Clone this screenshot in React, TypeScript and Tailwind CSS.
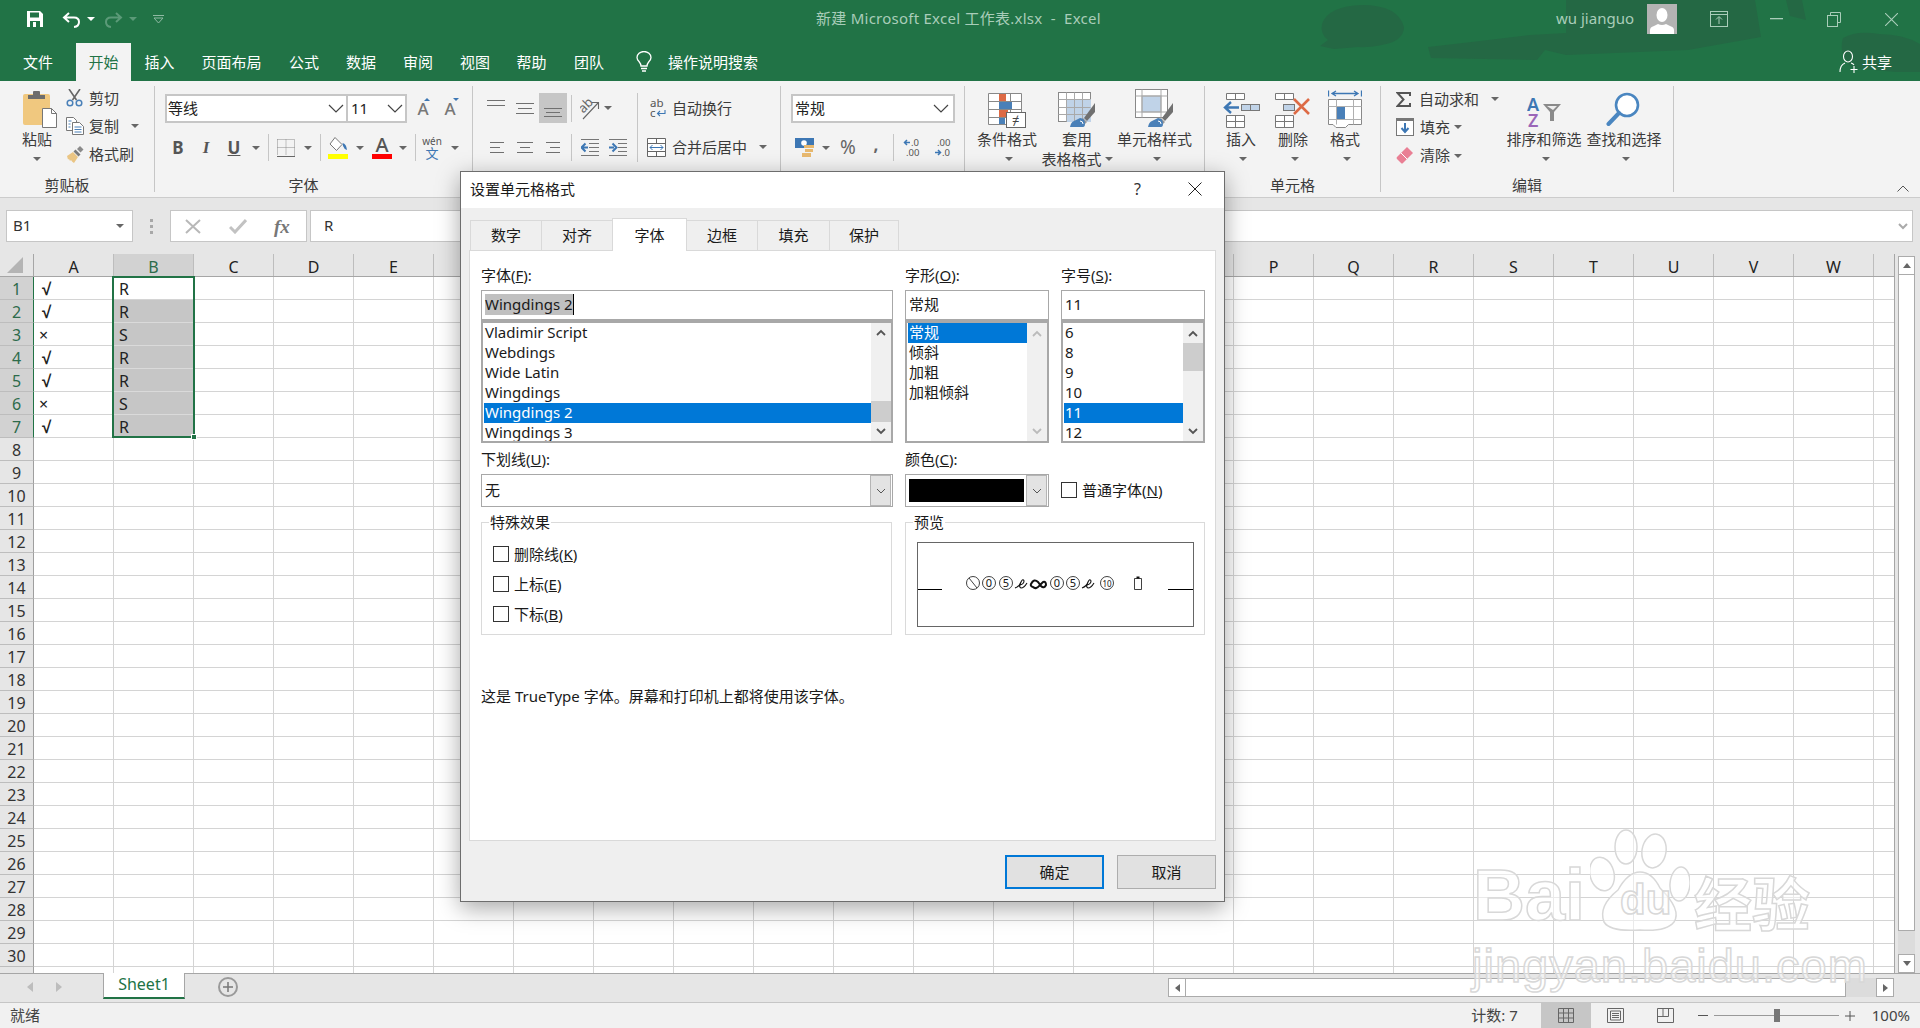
import type { ReactNode } from 'react';

const GREEN = '#217346';

function Caret({ className = '' }: { className?: string }) {
  return (
    <svg width="8" height="4" viewBox="0 0 8 4" className={`shrink-0 ${className}`}>
      <polygon points="0,0 8,0 4,4" fill="#666" />
    </svg>
  );
}

function Chevron() {
  return (
    <svg width="16" height="9" viewBox="0 0 16 9" className="shrink-0">
      <polyline points="1,1 8,8 15,1" fill="none" stroke="#444" strokeWidth="1.2" />
    </svg>
  );
}

function Sep({ className = 'h-[27px]' }: { className?: string }) {
  return <div className={`w-px bg-[#c6c6c6] ${className}`} />;
}

/* ---------- ribbon icons ---------- */

function PasteIcon() {
  return (
    <svg width="35" height="38" viewBox="0 0 35 38" className="ml-[7px]">
      <rect x="0" y="4" width="27" height="31" rx="2" fill="#f0c87f" />
      <path d="M5 9V5h5V2q0-1 1-1h5q1 0 1 1v3h5v4z" fill="#6d6d6d" />
      <path d="M19.5 18.5h9l5 5v14h-14z" fill="#fff" stroke="#777" />
      <path d="M28.5 18.5v5h5" fill="none" stroke="#777" />
    </svg>
  );
}

function ScissorsIcon() {
  return (
    <svg width="17" height="18" viewBox="0 0 17 18">
      <path d="M3 0l7.5 11M14 0L6.500 11" stroke="#666" strokeWidth="1.6" fill="none" />
      <circle cx="4" cy="14" r="2.800" fill="none" stroke="#4a80b8" strokeWidth="1.500" />
      <circle cx="13" cy="14" r="2.800" fill="none" stroke="#4a80b8" strokeWidth="1.500" />
    </svg>
  );
}

function CopyIcon() {
  return (
    <svg width="18" height="18" viewBox="0 0 18 18">
      <path d="M.5.5h7l3 3v10H.5z" fill="#fff" stroke="#777" />
      <path d="M6.500 5.500h7l4 4v8h-11z" fill="#fff" stroke="#777" />
      <path d="M2.500 4h3M2.500 7h2M2.500 10h2M8.500 10h7M8.500 12.500h7M8.500 15h7" stroke="#4a80b8" />
    </svg>
  );
}

function BrushIcon() {
  return (
    <svg width="18" height="17" viewBox="0 0 18 17">
      <path d="M1 10l6-4 5 5-4 6q-2-1-3-3l-1 1-1-2-1 .5z" fill="#eac584" />
      <path d="M7.500 5.500l2-2 5 5-2 2z" fill="#7a7a7a" />
      <path d="M11 3l3-3 3.500 3.500-3 3z" fill="#8a8a8a" />
    </svg>
  );
}

function AlignIcon({ lines }: { lines: [number, number, number][] }) {
  return (
    <svg width="20" height="22" viewBox="0 0 20 22">
      {lines.map(([y, x1, x2]) => (
        <line key={y} x1={x1} x2={x2} y1={y + 0.5} y2={y + 0.5} stroke="#707070" />
      ))}
    </svg>
  );
}

function BorderIcon() {
  return (
    <svg width="18" height="18" viewBox="0 0 18 18">
      <path d="M.5.5h17v16M.5.5v16M9 .5v16M.5 8.500h17" fill="none" stroke="#8a8a8a" strokeDasharray="1 1" />
      <path d="M0 17.500h18" stroke="#666" />
    </svg>
  );
}

function FillColorIcon() {
  return (
    <svg width="20" height="23" viewBox="0 0 20 23">
      <path d="M7 1.500l7 7-5.500 6-6.500-6.500z" fill="#fff" stroke="#777" />
      <path d="M14.500 7q4 1 4.500 7-3-1-4-4z" fill="#3d77b4" />
      <rect x="0" y="18" width="20" height="5" fill="#ffff00" />
    </svg>
  );
}

function OrientIcon() {
  return (
    <svg width="20" height="24" viewBox="0 0 20 24">
      <text x="0" y="14" fontSize="13" fill="#666" transform="rotate(-45 6 12)">ab</text>
      <path d="M3 23L18 7M12 6.500h6.500V13" fill="none" stroke="#666" strokeWidth="1.100" />
    </svg>
  );
}

function IndentIcon({ flip }: { flip?: boolean }) {
  return (
    <svg width="18" height="18" viewBox="0 0 18 18">
      <path d={flip ? 'M0 1.500h18M9 5.500h9M9 9.500h9M9 13.500h9M0 17.500h18' : 'M0 1.500h18M8 5.500h10M8 9.500h10M8 13.500h10M0 17.500h18'} stroke="#777" />
      {flip ? (
        <path d="M0 9.500h5M3.500 5.500l4 4-4 4" fill="none" stroke="#3d77b4" strokeWidth="2" />
      ) : (
        <path d="M7 9.500H2M4.500 5.500l-4 4 4 4" fill="none" stroke="#3d77b4" strokeWidth="2" />
      )}
    </svg>
  );
}

function WrapIcon() {
  return (
    <svg width="16" height="20" viewBox="0 0 16 20">
      <text x="0" y="9" fontSize="11.500" fill="#555">ab</text>
      <text x="0" y="19" fontSize="11.500" fill="#555">c</text>
      <path d="M15 12v3.500H8M10 13l-2.500 2.500L10 18" fill="none" stroke="#3d77b4" strokeWidth="1.100" />
    </svg>
  );
}

function MergeIcon() {
  return (
    <svg width="19" height="19" viewBox="0 0 19 19">
      <path d="M.5.500h18v18H.5zM.5 5.500h18M.5 13.500h18M9.500.5v5M9.500 13.500v5" fill="#fff" stroke="#666" />
      <path d="M3 9.500h13M5.500 7l-2.500 2.500L5.500 12M13.500 7l2.500 2.500-2.500 2.500" fill="none" stroke="#3d77b4" />
    </svg>
  );
}

function MoneyIcon() {
  return (
    <svg width="20" height="19" viewBox="0 0 20 19">
      <rect x="0" y="0" width="19" height="10" fill="#3d77b4" />
      <circle cx="9" cy="5" r="2.800" fill="#fff" />
      <rect x="9" y="7" width="10" height="3" fill="#e8b96f" />
      <rect x="10" y="11" width="8" height="3" fill="#e8b96f" />
      <rect x="7" y="15" width="9" height="4" fill="#e8b96f" />
    </svg>
  );
}

function DecimalIcon({ inc }: { inc?: boolean }) {
  return (
    <svg width="18" height="19" viewBox="0 0 18 19">
      <text x={inc ? 8 : 3} y="8" fontSize="9.500" fill="#555">{inc ? '.0' : '.00'}</text>
      <text x={inc ? 3 : 8} y="18" fontSize="9.500" fill="#555">{inc ? '.00' : '.0'}</text>
      {inc ? (
        <path d="M7 4.500H2M4 2l-2.500 2.500L4 7" fill="none" stroke="#3d77b4" strokeWidth="1.500" />
      ) : (
        <path d="M1 14.500h5M4 12l2.500 2.500L4 17" fill="none" stroke="#3d77b4" strokeWidth="1.500" />
      )}
    </svg>
  );
}

function CondIcon() {
  return (
    <svg width="38" height="35" viewBox="0 0 38 35">
      <path d="M.5.5h33v31H.5zM.5 8.500h33M.5 16.500h33M.5 24.500h33M11.500.5v31M22.500.5v31" fill="#fff" stroke="#888" />
      <rect x="11" y="1" width="7" height="7" fill="#dd6a45" />
      <rect x="11" y="9" width="13" height="7" fill="#4a80b8" />
      <rect x="11" y="17" width="9" height="7" fill="#dd6a45" />
      <rect x="11" y="25" width="6" height="6" fill="#4a80b8" />
      <rect x="18.500" y="19.500" width="19" height="15" fill="#fff" stroke="#666" />
      <text x="24" y="32" fontSize="13" fill="#444">≠</text>
    </svg>
  );
}

function PaintBrush({ x, y }: { x: number; y: number }) {
  return (
    <g transform={`translate(${x} ${y})`}>
      <path d="M22 0v9l-8 9-3-3z" fill="#707070" />
      <path d="M10 15l4 4-2 2-4-4z" fill="#999" />
      <path d="M7 15q5 0 5 6 0 3-2 3H-3q1-5 4-6z" fill="#4a80b8" />
      <path d="M7 18q3 0 3 3" fill="none" stroke="#fff" />
    </g>
  );
}

function TableIcon() {
  return (
    <svg width="38" height="36" viewBox="0 0 38 36">
      <rect x=".5" y=".5" width="32" height="29" fill="#fff" stroke="#888" />
      <rect x="9" y="7" width="24" height="23" fill="#c0d3e8" />
      <path d="M.5 7.500h32M.5 15.500h32M.5 22.500h32M8.500.5v29M16.500.5v29M24.500.5v29" stroke="#a9a9a9" fill="none" />
      <PaintBrush x="15" y="11" />
    </svg>
  );
}

function CellStyleIcon() {
  return (
    <svg width="39" height="39" viewBox="0 0 39 39">
      <rect x=".5" y=".5" width="32" height="28" fill="#fff" stroke="#888" />
      <rect x="7" y="7" width="19" height="16" fill="#c0d3e8" stroke="#a9a9a9" />
      <path d="M7 .5v28M26 .5v28M.5 7h32M.5 23h32" stroke="#a9a9a9" fill="none" />
      <PaintBrush x="16" y="14" />
    </svg>
  );
}

function InsertIcon() {
  return (
    <svg width="37" height="35" viewBox="0 0 37 35">
      <path d="M3.500.5h18v6h-18zM12.500.5v6M3.500 22.500h18v12h-18zM3.500 28.500h18M12.500 22.500v12" fill="#fff" stroke="#777" />
      <rect x="18.500" y="11.500" width="18" height="6" fill="#c0d3e8" stroke="#777" />
      <path d="M27.500 11.500v6" stroke="#777" />
      <path d="M16 14.500H3M8 9l-6 5.500L8 20" fill="none" stroke="#3d77b4" strokeWidth="2.400" />
    </svg>
  );
}

function DeleteIcon() {
  return (
    <svg width="36" height="35" viewBox="0 0 36 35">
      <path d="M.5.500h18v6H.5zM9.500.5v6M.5 22.500h18v12H.5zM.5 28.500h18M9.500 22.500v12" fill="#fff" stroke="#777" />
      <rect x="8.500" y="11.500" width="11" height="6" fill="#c0d3e8" stroke="#777" />
      <path d="M19 6l15 15M34 6L19 21" stroke="#dd6a45" strokeWidth="2.600" />
    </svg>
  );
}

function FormatIcon() {
  return (
    <svg width="34" height="38" viewBox="0 0 34 38">
      <path d="M.5.5v6M33.500.5v6M4 3.500h26M8 1L4 3.500 8 6M26 1l4 2.500L26 6" fill="none" stroke="#3d77b4" strokeWidth="1.300" />
      <path d="M.5 9.500h33v25h-13l-3 3H8l-3-3H.5z" fill="#fff" stroke="#888" />
      <path d="M.5 16.500h33M.5 29.500h33M8.500 9.500v25M25.500 9.500v25" stroke="#b0b0b0" fill="none" />
      <rect x="9" y="17" width="8" height="12" fill="#4a80b8" />
    </svg>
  );
}

function SigmaIcon() {
  return (
    <svg width="15" height="15" viewBox="0 0 15 15">
      <path d="M14 4V1H1.500l6 6.500-6 6.500H14v-3" fill="none" stroke="#555" strokeWidth="2" />
    </svg>
  );
}

function FillDownIcon() {
  return (
    <svg width="18" height="18" viewBox="0 0 18 18">
      <rect x=".5" y=".5" width="17" height="17" fill="#fff" stroke="#777" />
      <rect x="0" y="0" width="18" height="3" fill="#777" />
      <path d="M9 5v9M5.500 10L9 14l3.500-4" fill="none" stroke="#3d77b4" strokeWidth="2" />
    </svg>
  );
}

function EraserIcon() {
  return (
    <svg width="17" height="17" viewBox="0 0 17 17">
      <path d="M11 0l6 6-10 10q-1 1-2 0l-4-4q-1-1 0-2z" fill="#e97f94" />
      <path d="M5 6l6 6" stroke="#fff" />
    </svg>
  );
}

function SortIcon() {
  return (
    <svg width="35" height="32" viewBox="0 0 35 32">
      <text x="0" y="15" fontSize="18" fontWeight="600" fill="#3d77b4">A</text>
      <text x="1" y="31" fontSize="18" fontWeight="600" fill="#9a66b8">Z</text>
      <path d="M16 8h18l-7 8v9h-4v-9z" fill="#8a8a8a" />
      <path d="M20 10h10l-4 4z" fill="#eee" />
    </svg>
  );
}

function FindIcon() {
  return (
    <svg width="36" height="36" viewBox="0 0 36 36">
      <circle cx="21" cy="13" r="11" fill="#fff" stroke="#4a86c0" strokeWidth="2.600" />
      <path d="M13 21L2.500 32" stroke="#4a86c0" strokeWidth="4" strokeLinecap="round" />
    </svg>
  );
}

/* ---------- ribbon layout ---------- */

function Group({ label, className, labelClass = '', children }: { label?: string; className: string; labelClass?: string; children: ReactNode }) {
  return (
    <div className={`flex h-[106px] shrink-0 flex-col border-r border-[#c6c6c6] ${className}`}>
      <div className="h-[92px]">{children}</div>
      {label && <div className={`h-[14px] text-center leading-[14px] ${labelClass}`}>{label}</div>}
    </div>
  );
}

function BigButton({ className, icon, label, second }: { className: string; icon: ReactNode; label: string; second?: ReactNode }) {
  return (
    <div className={`flex shrink-0 flex-col items-center ${className}`}>
      <div className="flex h-[43px] items-end justify-center pb-px">{icon}</div>
      <div className="h-[20px] whitespace-nowrap leading-[20px]">{label}</div>
      <div className="flex h-[20px] items-center justify-center whitespace-nowrap">
        {second ?? <Caret className="ml-[4px]" />}
      </div>
    </div>
  );
}

function Cell({ className, children }: { className: string; children: ReactNode }) {
  return <div className={`flex shrink-0 items-center justify-center ${className}`}>{children}</div>;
}

function RibbonTabs() {
  const tabs: [string, string][] = [
    ['文件', 'w-[76px]'],
    ['开始', 'w-[55px] bg-[#f3f3f3] text-[#217346]'],
    ['插入', 'w-[57px]'],
    ['页面布局', 'w-[87px]'],
    ['公式', 'w-[58px]'],
    ['数据', 'w-[56px]'],
    ['审阅', 'w-[58px]'],
    ['视图', 'w-[56px]'],
    ['帮助', 'w-[57px]'],
    ['团队', 'w-[58px]'],
  ];
  return (
    <div className="relative flex h-[38px] items-stretch text-white">
      {tabs.map(([name, cls]) => (
        <div key={name} className={`flex items-center justify-center pt-px ${cls}`}>{name}</div>
      ))}
      <div className="ml-[18px] flex items-center">
        <svg width="16" height="22" viewBox="0 0 16 22" fill="none" stroke="#fff" strokeWidth="1.300">
          <path d="M5 15q0-2-2-4.500Q1 8.500 1 6.500a7 6 0 0 1 14 0q0 2-2 4-2 2.500-2 4.500z" />
          <path d="M5 17.500h6M6 20h4" />
        </svg>
      </div>
      <div className="ml-[16px] flex items-center">操作说明搜索</div>
      <div className="ml-auto mr-[28px] flex items-center">
        <svg width="20" height="24" viewBox="0 0 20 24" fill="none" stroke="#fff" strokeWidth="1.100" className="mr-[3px]">
          <ellipse cx="9" cy="6.500" rx="4.500" ry="5.500" />
          <path d="M1 22q0-7 5-9M12 13q2 .5 3 2M15 16v7M11.500 19.500h7" />
        </svg>
        共享
      </div>
    </div>
  );
}

function TitleBar() {
  return (
    <div className="flex h-[43px] items-start pt-[4px] text-[#a9cdb9]">
      <div className="flex h-[30px] w-[816px] shrink-0 items-center pl-[27px]">
        <svg width="16" height="16" viewBox="0 0 16 16">
          <path d="M0 0h13l3 3v13H0z" fill="#fff" />
          <rect x="3" y="1.500" width="9" height="5" fill="#217346" />
          <rect x="3" y="10" width="10" height="6" fill="#217346" />
          <rect x="6" y="11" width="3" height="5" fill="#fff" />
        </svg>
        <svg width="19" height="17" viewBox="0 0 19 17" fill="none" stroke="#fff" strokeWidth="2" className="ml-[19px]">
          <path d="M7 2L2 6.500 7 11M2 6.500h10q5 0 5 4.500t-5 5" />
        </svg>
        <Caret className="ml-[6px] [&_polygon]:fill-white" />
        <svg width="19" height="17" viewBox="0 0 19 17" fill="none" stroke="#5b9a78" strokeWidth="2" className="ml-[9px]">
          <path d="M12 2l5 4.500L12 11M17 6.500H7q-5 0-5 4.500t5 5" />
        </svg>
        <Caret className="ml-[6px] [&_polygon]:fill-[#5b9a78]" />
        <svg width="11" height="9" viewBox="0 0 11 9" fill="none" stroke="#8fbaa3" className="ml-[16px]">
          <path d="M0 .5h11M1 3l4.500 5L10 3z" />
        </svg>
      </div>
      <div className="flex h-[30px] items-center whitespace-pre pb-[2px] tracking-[0.25px]">新建 Microsoft Excel 工作表.xlsx  -  Excel</div>
      <div className="ml-auto flex h-[30px] items-center">
        <span className="mr-[13px] pb-[1px]">wu jianguo</span>
        <div className="flex h-[30px] w-[30px] items-end justify-center overflow-hidden bg-[#b3b3b3]">
          <svg width="24" height="27" viewBox="0 0 24 27" fill="#fff">
            <ellipse cx="12" cy="8" rx="5.500" ry="7" />
            <path d="M0 27v-4q0-3 4-4l4-2q4 2 8 0l4 2q4 1 4 4v4z" />
          </svg>
        </div>
        <Cell className="ml-[13px] w-[58px]">
          <svg width="18" height="16" viewBox="0 0 18 16" fill="none" stroke="#a9cdb9">
            <rect x=".5" y=".5" width="17" height="15" />
            <path d="M.5 3.500h17M9 13V6M6 8.500L9 5.500l3 3" />
          </svg>
        </Cell>
        <Cell className="w-[57px]">
          <svg width="13" height="2"><rect width="13" height="1.300" fill="#a9cdb9" /></svg>
        </Cell>
        <Cell className="w-[57px]">
          <svg width="14" height="15" viewBox="0 0 14 15" fill="none" stroke="#a9cdb9">
            <path d="M3.500 3V.5h10v10H11" />
            <rect x=".5" y="3.500" width="10" height="11" />
          </svg>
        </Cell>
        <Cell className="w-[58px]">
          <svg width="13" height="13" viewBox="0 0 13 13" stroke="#a9cdb9" strokeWidth="1.100">
            <path d="M0 0l13 13M13 0L0 13" />
          </svg>
        </Cell>
      </div>
    </div>
  );
}

function Ribbon() {
  return (
    <div className="flex h-[117px] border-b border-[#cccccc] bg-[#f3f3f3] pt-[5px] text-[#3b3b3b]">
      <Group label="剪贴板" className="w-[155px]" labelClass="pr-[20px]">
        <div className="flex">
          <BigButton className="ml-[19px] w-[36px]" icon={<PasteIcon />} label="粘贴" second={<Caret className="-ml-[1px]" />} />
          <div className="ml-[11px] -mt-[2px] flex flex-col">
            <div className="flex h-[28px] items-center"><ScissorsIcon /><span className="ml-[6px]">剪切</span></div>
            <div className="flex h-[28px] items-center"><CopyIcon /><span className="ml-[5px]">复制</span><Caret className="ml-[12px]" /></div>
            <div className="flex h-[29px] items-center"><BrushIcon /><span className="ml-[5px]">格式刷</span></div>
          </div>
        </div>
      </Group>

      <Group label="字体" className="w-[318px]" labelClass="pr-[20px]">
        <div className="ml-[10px] mt-[8px] flex h-[29px] items-center">
          <div className="flex h-[29px] w-[183px] items-center justify-between border-2 border-[#c6c6c6] bg-white pl-[1px] pr-[2px] text-[#222]">等线<Chevron /></div>
          <div className="flex h-[29px] w-[59px] items-center justify-between border-y-2 border-r-2 border-[#c6c6c6] bg-white pl-[3px] pr-[2px] text-[#222]">11<Chevron /></div>
          <div className="relative ml-[9px] w-[14px] pt-px text-center text-[17px] font-medium text-[#777]">A
            <span className="absolute right-0 top-[3px] h-0 w-0 border-x-[3px] border-b-[3px] border-x-transparent border-b-[#3d77b4]" />
          </div>
          <div className="relative ml-[13px] w-[14px] pt-px text-center text-[17px] font-medium text-[#777]">A
            <span className="absolute right-[-2px] top-[3px] h-0 w-0 border-x-[3px] border-t-[3px] border-x-transparent border-t-[#3d77b4]" />
          </div>
        </div>
        <div className="ml-[10px] mt-[11px] flex h-[27px] items-center">
          <Cell className="w-[26px] text-[17px] font-bold text-[#555]">B</Cell>
          <Cell className="w-[30px] text-[17px] font-bold italic text-[#555] [font-family:'Liberation_Serif',serif]">I</Cell>
          <Cell className="w-[26px] text-[17px] font-bold text-[#555] underline">U</Cell>
          <Cell className="w-[18px]"><Caret /></Cell>
          <Cell className="w-[6px]"><Sep /></Cell>
          <Cell className="w-[30px]"><BorderIcon /></Cell>
          <Cell className="w-[14px]"><Caret /></Cell>
          <Cell className="w-[10px]"><Sep /></Cell>
          <Cell className="w-[26px]"><FillColorIcon /></Cell>
          <Cell className="w-[18px]"><Caret /></Cell>
          <Cell className="w-[26px]">
            <div className="flex flex-col items-center">
              <span className="h-[18px] text-[20px] font-medium leading-[18px] text-[#555]">A</span>
              <span className="h-[5px] w-[20px] bg-[#ff0000]" />
            </div>
          </Cell>
          <Cell className="w-[16px]"><Caret /></Cell>
          <Cell className="w-[8px]"><Sep /></Cell>
          <Cell className="w-[26px]">
            <div className="flex flex-col items-center text-[#3d77b4]">
              <span className="h-[11px] text-[10px] leading-[11px] text-[#555]">wén</span>
              <span className="h-[13px] text-[13px] leading-[13px]">文</span>
            </div>
          </Cell>
          <Cell className="w-[20px]"><Caret /></Cell>
        </div>
      </Group>

      <Group className="w-[308px]">
        <div className="flex pt-[7px]">
          <div className="flex w-[164px] flex-col pl-[10px]">
            <div className="flex h-[30px] items-center">
              <Cell className="w-[28px]"><AlignIcon lines={[[3, 0, 18], [8, 0, 18]]} /></Cell>
              <Cell className="w-[28px]"><AlignIcon lines={[[6, 1, 19], [11, 3, 17], [16, 1, 19]]} /></Cell>
              <Cell className="h-[30px] w-[28px] bg-[#c6c6c6]"><AlignIcon lines={[[11, 1, 19], [15, 3, 17], [19, 1, 19]]} /></Cell>
              <Cell className="w-[8px]"><Sep /></Cell>
              <Cell className="w-[29px]"><OrientIcon /></Cell>
              <Cell className="w-[8px]"><Caret /></Cell>
            </div>
            <div className="mt-[10px] flex h-[28px] items-center">
              <Cell className="w-[28px]"><AlignIcon lines={[[6, 3, 17], [11, 3, 13], [16, 3, 17]]} /></Cell>
              <Cell className="w-[28px]"><AlignIcon lines={[[6, 2, 18], [11, 5, 15], [16, 2, 18]]} /></Cell>
              <Cell className="w-[28px]"><AlignIcon lines={[[6, 3, 17], [11, 7, 17], [16, 3, 17]]} /></Cell>
              <Cell className="w-[8px]"><Sep /></Cell>
              <Cell className="w-[29px]"><IndentIcon /></Cell>
              <Cell className="w-[28px]"><IndentIcon flip /></Cell>
            </div>
          </div>
          <div className="flex h-[69px] flex-col border-l border-[#c6c6c6]">
            <div className="flex h-[30px] items-center pl-[12px]"><WrapIcon /><span className="ml-[6px]">自动换行</span></div>
            <div className="mt-[10px] flex h-[28px] items-center pl-[9px]"><MergeIcon /><span className="ml-[6px]">合并后居中</span><Caret className="ml-[12px]" /></div>
          </div>
        </div>
      </Group>

      <Group className="w-[184px]">
        <div className="ml-[10px] mt-[8px] flex h-[29px] w-[164px] items-center justify-between border-2 border-[#c6c6c6] bg-white pl-[2px] pr-[4px] text-[#222]">常规<Chevron /></div>
        <div className="ml-[10px] mt-[11px] flex h-[27px] items-center">
          <Cell className="w-[28px]"><MoneyIcon /></Cell>
          <Cell className="w-[14px]"><Caret /></Cell>
          <Cell className="w-[30px] text-[19px] text-[#666]">%</Cell>
          <Cell className="w-[26px] pb-[6px] text-[17px] font-bold text-[#666]">,</Cell>
          <Cell className="w-[8px]"><Sep /></Cell>
          <Cell className="w-[30px]"><DecimalIcon inc /></Cell>
          <Cell className="w-[32px]"><DecimalIcon /></Cell>
        </div>
      </Group>

      <Group className="w-[240px]">
        <div className="flex pl-[7px]">
          <BigButton className="w-[70px]" icon={<CondIcon />} label="条件格式" />
          <BigButton className="w-[70px]" icon={<TableIcon />} label="套用" second={<>表格格式<Caret className="ml-[3px]" /></>} />
          <BigButton className="w-[85px]" icon={<CellStyleIcon />} label="单元格样式" />
        </div>
      </Group>

      <Group label="单元格" className="w-[176px]">
        <div className="flex pl-[10px]">
          <BigButton className="w-[52px]" icon={<InsertIcon />} label="插入" />
          <BigButton className="w-[52px]" icon={<DeleteIcon />} label="删除" />
          <BigButton className="w-[52px]" icon={<FormatIcon />} label="格式" />
        </div>
      </Group>

      <Group label="编辑" className="w-[293px]">
        <div className="flex">
          <div className="ml-[15px] -mt-px flex w-[108px] flex-col">
            <div className="flex h-[28px] items-center"><SigmaIcon /><span className="ml-[8px]">自动求和</span><Caret className="ml-[12px]" /></div>
            <div className="flex h-[28px] items-center"><FillDownIcon /><span className="ml-[6px]">填充</span><Caret className="ml-[4px]" /></div>
            <div className="flex h-[29px] items-center"><EraserIcon /><span className="ml-[7px]">清除</span><Caret className="ml-[4px]" /></div>
          </div>
          <BigButton className="w-[80px]" icon={<SortIcon />} label="排序和筛选" />
          <BigButton className="w-[80px]" icon={<FindIcon />} label="查找和选择" />
        </div>
      </Group>

      <div className="relative flex-1">
        <svg width="12" height="7" viewBox="0 0 12 7" fill="none" stroke="#555" className="absolute bottom-[5px] right-[11px]">
          <path d="M.5 6.500L6 1l5.500 5.500" />
        </svg>
      </div>
    </div>
  );
}

function FormulaBar() {
  return (
    <div className="flex h-[56px] bg-[#e6e6e6] pt-[12px]">
      <div className="ml-[6px] flex h-[32px] w-[127px] items-center justify-between border border-[#c6c6c6] bg-white pb-[2px] pl-[6px] pr-[8px] text-[15px] text-[#333]">
        B1<Caret className="mt-[2px]" />
      </div>
      <div className="flex h-[32px] w-[37px] flex-col items-center justify-center gap-[3px]">
        <span className="h-[3px] w-[3px] bg-[#a8a8a8]" />
        <span className="h-[3px] w-[3px] bg-[#a8a8a8]" />
        <span className="h-[3px] w-[3px] bg-[#a8a8a8]" />
      </div>
      <div className="flex h-[32px] w-[137px] items-center border border-[#c6c6c6] bg-white">
        <svg width="16" height="15" viewBox="0 0 16 15" stroke="#b8b8b8" strokeWidth="2" className="ml-[14px]"><path d="M1 1l14 13M15 1L1 14" /></svg>
        <svg width="18" height="15" viewBox="0 0 18 15" fill="none" stroke="#c2c2c2" strokeWidth="3" className="ml-[28px]"><path d="M1 8l5 5L17 1" /></svg>
        <span className="ml-[27px] text-[19px] font-bold italic leading-none text-[#777] [font-family:'Liberation_Serif',serif]">fx</span>
      </div>
      <div className="ml-[3px] flex h-[32px] w-[1603px] items-center justify-between border border-[#c6c6c6] bg-white pb-[2px] pl-[13px] pr-[4px] text-[15px] text-[#333]">
        R
        <svg width="10" height="7" viewBox="0 0 10 7" fill="none" stroke="#aaa" strokeWidth="2" className="mt-[2px]"><path d="M1 1l4 4 4-4" /></svg>
      </div>
    </div>
  );
}

/* ---------- sheet ---------- */

const COLUMNS = 'ABCDEFGHIJKLMNOPQRSTUVW'.split('');
const COL_A = ['√', '√', '×', '√', '√', '×', '√'];
const COL_B = ['R', 'R', 'S', 'R', 'R', 'S', 'R'];
const ROWS = Array.from({ length: 31 }, (_, i) => i + 1);

function SheetRow({ n }: { n: number }) {
  const active = n <= 7;
  return (
    <div className="flex h-[23px] shrink-0 text-[16px] leading-[21px] text-[#222]">
      <div className={`flex h-[23px] w-[34px] shrink-0 items-center justify-center border-b border-r border-b-[#bdbdbd] pt-[2px] ${active ? 'border-r-[#217346] bg-[#d2d2d2] text-[#2d6b4b]' : 'border-r-[#9f9f9f] bg-[#e6e6e6] text-[#333]'}`}>{n <= 30 ? n : ''}</div>
      {COLUMNS.map((c) => {
        const selected = c === 'B' && n >= 2 && n <= 7;
        const a = c === 'A' ? COL_A[n - 1] : undefined;
        return (
          <div key={c} className={`h-[23px] w-[80px] shrink-0 border-b border-r border-[#d4d4d4] pt-[2px] ${selected ? 'bg-[#c6c6c6] border-b-[#dadada]' : 'bg-white'} ${a === '√' ? "pl-[8px] text-[17px] font-bold [font-family:'Liberation_Sans',sans-serif]" : 'pl-[5px]'}`}>
            {a ?? (c === 'B' ? COL_B[n - 1] : '')}
          </div>
        );
      })}
      <div className="h-[23px] w-[20px] shrink-0 border-b border-[#d4d4d4] bg-white" />
    </div>
  );
}

function Sheet() {
  return (
    <div className="flex h-[719px] bg-[#e6e6e6]">
      <div className="relative w-[1895px] shrink-0 overflow-hidden border-r border-[#a6a6a6]">
        <div className="flex h-[23px] border-b border-[#a6a6a6] text-[16px] text-[#222]">
          <div className="flex h-[22px] w-[34px] shrink-0 items-center justify-center border-r border-[#a6a6a6]">
            <svg width="16" height="16" viewBox="0 0 16 16" className="ml-[-3px]"><polygon points="16,0 16,16 0,16" fill="#b4b4b4" /></svg>
          </div>
          {COLUMNS.map((c) => (
            <div key={c} className={`flex h-[22px] w-[80px] shrink-0 items-center justify-center border-r border-[#bdbdbd] pt-[4px] ${c === 'B' ? 'bg-[#d2d2d2] text-[#2d6b4b]' : ''}`}>{c}</div>
          ))}
        </div>
        {ROWS.map((n) => <SheetRow key={n} n={n} />)}
        <div className="absolute left-[112px] top-[22px] h-[162px] w-[83px] border-2 border-[#217346]">
          <span className="absolute -bottom-[4px] -right-[4px] h-[6px] w-[6px] border border-white bg-[#217346]" />
        </div>
      </div>
      <div className="flex w-[25px] flex-col pl-[3px] pt-[2px]">
        <div className="flex h-[19px] w-[17px] items-center justify-center border border-[#ababab] bg-white">
          <span className="h-0 w-0 border-x-[4px] border-b-[5px] border-x-transparent border-b-[#666]" />
        </div>
        <div className="h-[656px] w-[17px] border-x border-b border-[#ababab] bg-white" />
        <div className="w-[17px] flex-1 bg-[#dcdcdc]" />
        <div className="flex h-[19px] w-[17px] items-center justify-center border border-[#ababab] bg-white">
          <span className="h-0 w-0 border-x-[4px] border-t-[5px] border-x-transparent border-t-[#666]" />
        </div>
      </div>
    </div>
  );
}

function SheetTabs() {
  return (
    <div className="flex h-[29px] border-t border-[#a6a6a6] bg-[#e6e6e6]">
      <div className="flex w-[103px] items-center pb-[2px] pl-[27px]">
        <span className="h-0 w-0 border-y-[5px] border-r-[6px] border-y-transparent border-r-[#bdbdbd]" />
        <span className="ml-[23px] h-0 w-0 border-y-[5px] border-l-[6px] border-y-transparent border-l-[#bdbdbd]" />
      </div>
      <div className="-mt-px flex h-[26px] w-[82px] items-center justify-center border-x border-b-2 border-[#a6a6a6] border-b-[#217346] bg-white pb-[2px] text-[16px] text-[#217346]">Sheet1</div>
      <div className="ml-[33px] flex items-center pb-[2px]">
        <div className="flex h-[20px] w-[20px] items-center justify-center rounded-full border-2 border-[#9a9a9a] text-[#777]">
          <svg width="10" height="10" viewBox="0 0 10 10" stroke="#777" strokeWidth="1.500"><path d="M5 0v10M0 5h10" /></svg>
        </div>
      </div>
      <div className="ml-[930px] mt-[4px] flex h-[19px] w-[726px]">
        <div className="flex h-[19px] w-[18px] items-center justify-center border border-[#ababab] bg-white">
          <span className="h-0 w-0 border-y-[4px] border-r-[5px] border-y-transparent border-r-[#666]" />
        </div>
        <div className="h-[19px] w-[660px] border-y border-r border-[#ababab] bg-white" />
        <div className="h-[19px] flex-1 bg-[#dcdcdc]" />
        <div className="flex h-[19px] w-[18px] items-center justify-center border border-[#ababab] bg-white">
          <span className="h-0 w-0 border-y-[4px] border-l-[5px] border-y-transparent border-l-[#666]" />
        </div>
      </div>
    </div>
  );
}

function StatusBar() {
  return (
    <div className="flex h-[26px] items-center border-t border-[#c6c6c6] bg-[#f1f1f1] text-[15px] text-[#444]">
      <span className="ml-[10px]">就绪</span>
      <span className="ml-auto">计数: 7</span>
      <Cell className="ml-[23px] h-[25px] w-[50px] bg-[#c6c6c6]">
        <svg width="16" height="15" viewBox="0 0 16 15" fill="none" stroke="#666"><path d="M.5.5h15v14H.5zM.5 5h15M.5 10h15M5.500.5v14M10.500.5v14" /></svg>
      </Cell>
      <Cell className="h-[25px] w-[50px]">
        <svg width="17" height="15" viewBox="0 0 17 15" fill="none" stroke="#666"><path d="M.5.5h16v14H.5zM3.500 3h10v9h-10zM5 5.500h7M5 7.500h7M5 9.500h7" /></svg>
      </Cell>
      <Cell className="h-[25px] w-[50px]">
        <svg width="17" height="15" viewBox="0 0 17 15" fill="none" stroke="#666"><path d="M.5.5h16v14H.5zM.5 8.500h11V.5M6 .5v8" /></svg>
      </Cell>
      <div className="ml-[7px] h-px w-[10px] bg-[#555]" />
      <div className="relative ml-[6px] h-px w-[125px] bg-[#999]">
        <span className="absolute -top-[6px] left-[60px] h-[13px] w-[6px] bg-[#777]" />
      </div>
      <div className="relative ml-[6px] h-[10px] w-[10px]">
        <svg width="10" height="10" viewBox="0 0 10 10" stroke="#555"><path d="M5 0v10M0 5h10" /></svg>
      </div>
      <span className="ml-[17px] mr-[10px]">100%</span>
    </div>
  );
}

/* ---------- dialog ---------- */

function Key({ k }: { k: string }) {
  return <>(<span className="underline">{k}</span>)</>;
}

function Check({ children }: { children: ReactNode }) {
  return (
    <div className="flex h-[16px] items-center">
      <span className="h-[16px] w-[16px] shrink-0 border border-[#333] bg-white" />
      <span className="ml-[5px] whitespace-nowrap">{children}</span>
    </div>
  );
}

function ListBox({ items, selected, thumb, dim, listClass }: { items: string[]; selected: string; thumb?: ReactNode; dim?: boolean; listClass: string }) {
  const stroke = dim ? '#bbbbbb' : '#555555';
  return (
    <div className={`flex h-[123px] border-2 border-t-[3px] border-[#a8a8a8] bg-white ${listClass}`}>
      <div className="min-w-0 flex-1 overflow-hidden pl-px">
        {items.map((t) => (
          <div key={t} className={`h-[20px] whitespace-nowrap pl-px leading-[18px] ${t === selected ? 'bg-[#0078d7] text-white' : ''}`}>{t}</div>
        ))}
      </div>
      <div className="flex w-[20px] shrink-0 flex-col items-center bg-[#f0f0f0]">
        <div className="flex h-[20px] items-center justify-center">
          <svg width="10" height="7" viewBox="0 0 10 7" fill="none" stroke={stroke} strokeWidth="1.800"><path d="M1 6l4-4 4 4" /></svg>
        </div>
        <div className="flex-1 self-stretch">{thumb}</div>
        <div className="flex h-[20px] items-center justify-center">
          <svg width="10" height="7" viewBox="0 0 10 7" fill="none" stroke={stroke} strokeWidth="1.800"><path d="M1 1l4 4 4-4" /></svg>
        </div>
      </div>
    </div>
  );
}

function Boxed({ children, className }: { children: ReactNode; className: string }) {
  return <div className={`flex h-[30px] items-center border border-[#a8a8a8] bg-white pb-[2px] pl-[3px] ${className}`}>{children}</div>;
}

function DropButton({ className }: { className: string }) {
  return (
    <div className={`flex w-[21px] shrink-0 items-center justify-center self-stretch border border-[#b5b5b5] bg-[#e3e3e3] ${className}`}>
      <svg width="10" height="6" viewBox="0 0 10 6" fill="none" stroke="#555"><path d="M1 1l4 4 4-4" /></svg>
    </div>
  );
}

function Legend({ children }: { children: ReactNode }) {
  return <span className="absolute -top-[10px] left-[7px] bg-white px-px leading-[18px]">{children}</span>;
}

function PreviewGlyphs() {
  const ring = (cx: number, t: string) => (
    <g key={cx + t}>
      <circle cx={cx} cy="8" r="6.500" fill="none" stroke="#111" strokeWidth=".8" />
      <text x={cx} y="12" textAnchor="middle" fontSize={t.length > 1 ? 8 : 11} fill="#111">{t}</text>
    </g>
  );
  const curl = (x: number) => (
    <path key={x} d={`M${x} 13q5-2 6-6 2-4 3-1 0 3-4 4-1 2 1 3 3 0 6-5`} fill="none" stroke="#111" strokeWidth="1.100" />
  );
  return (
    <svg width="180" height="18" viewBox="0 0 180 18">
      <circle cx="7" cy="8" r="6.500" fill="none" stroke="#111" strokeWidth=".8" />
      <path d="M3 3l8 10" stroke="#111" strokeWidth=".8" />
      {ring(23, '0')}
      {ring(40, '5')}
      {curl(49)}
      <path d="M65 9q3-6 7-2l3 4q3 3 5-1 0-4-3-3l-3 3q-4 5-7 2-3-1-2-3z" fill="none" stroke="#111" strokeWidth="2" />
      {ring(91, '0')}
      {ring(107, '5')}
      {curl(116)}
      {ring(141, '10')}
      <path d="M168.500 3.500h7v11h-7z" fill="none" stroke="#111" strokeWidth=".8" />
      <rect x="170.500" y="1.500" width="3" height="2" fill="#111" />
    </svg>
  );
}

function Dialog() {
  const tabs: [string, string][] = [
    ['数字', 'w-[71px] border-l'],
    ['对齐', 'w-[71px] border-l'],
    ['字体', 'active'],
    ['边框', 'w-[71px] border-r'],
    ['填充', 'w-[72px] border-r'],
    ['保护', 'w-[69px] border-r'],
  ];
  return (
    <div className="absolute left-[460px] top-[171px] flex h-[731px] w-[765px] flex-col border border-[#6d6d6d] bg-[#efefef] text-[#1a1a1a] shadow-[0_6px_22px_rgba(0,0,0,0.35)]">
      <div className="flex h-[36px] shrink-0 items-center bg-white pb-[2px] pl-[9px]">
        设置单元格格式
        <span className="ml-auto mr-[47px] text-[16px] text-[#333]">?</span>
        <svg width="14" height="14" viewBox="0 0 14 14" stroke="#222" className="mr-[22px]"><path d="M.5.5l13 13M13.500.5l-13 13" /></svg>
      </div>
      <div className="ml-[9px] mt-[12px] flex h-[30px] items-end">
        {tabs.map(([t, cls]) =>
          cls === 'active' ? (
            <div key={t} className="relative z-10 -mb-px flex h-[33px] w-[75px] items-center justify-center border-x border-t border-[#d9d9d9] bg-white">{t}</div>
          ) : (
            <div key={t} className={`flex h-[30px] items-center justify-center border-t border-[#d9d9d9] ${cls}`}>{t}</div>
          ),
        )}
      </div>
      <div className="mx-[8px] h-[591px] border border-[#d9d9d9] bg-white pl-[11px] pt-[16px]">
        <div className="flex gap-x-[12px]">
          <div className="w-[412px]">
            <div className="mb-[5px] h-[18px] leading-[16px]">字体<Key k="F" />:</div>
            <Boxed className="w-full"><span className="border-r border-black bg-[#c0c0c0] leading-[21px]">Wingdings 2</span></Boxed>
            <ListBox
              listClass="w-full"
              selected="Wingdings 2"
              items={['Vladimir Script', 'Webdings', 'Wide Latin', 'Wingdings', 'Wingdings 2', 'Wingdings 3']}
              thumb={<div className="mt-[58px] h-[21px] bg-[#cdcdcd]" />}
            />
          </div>
          <div className="w-[144px]">
            <div className="mb-[5px] h-[18px] leading-[16px]">字形<Key k="O" />:</div>
            <Boxed className="w-full">常规</Boxed>
            <ListBox listClass="w-full" dim selected="常规" items={['常规', '倾斜', '加粗', '加粗倾斜']} />
          </div>
          <div className="w-[144px]">
            <div className="mb-[5px] h-[18px] leading-[16px]">字号<Key k="S" />:</div>
            <Boxed className="w-full">11</Boxed>
            <ListBox
              listClass="w-full"
              selected="11"
              items={['6', '8', '9', '10', '11', '12']}
              thumb={<div className="h-[28px] bg-[#cdcdcd]" />}
            />
          </div>
        </div>

        <div className="mt-[8px] flex gap-x-[12px]">
          <div className="w-[412px]">
            <div className="mb-[5px] h-[18px] leading-[16px]">下划线<Key k="U" />:</div>
            <div className="flex h-[33px] items-center border border-[#a8a8a8] bg-white pl-[3px]">
              无
              <div className="ml-auto flex h-full items-center pr-px"><DropButton className="h-full" /></div>
            </div>
          </div>
          <div className="w-[144px]">
            <div className="mb-[5px] h-[18px] leading-[16px]">颜色<Key k="C" />:</div>
            <div className="flex h-[33px] items-center border border-[#a8a8a8] bg-white pl-[3px] pr-px">
              <div className="h-[23px] w-[115px] bg-black" />
              <DropButton className="ml-auto" />
            </div>
          </div>
          <div className="mt-[31px] w-[144px]">
            <Check>普通字体<Key k="N" /></Check>
          </div>
        </div>

        <div className="mt-[15px] flex gap-x-[13px]">
          <div className="relative h-[113px] w-[411px] border border-[#dadada] pl-[11px] pt-[23px]">
            <Legend>特殊效果</Legend>
            <div className="flex flex-col gap-y-[14px]">
              <Check>删除线<Key k="K" /></Check>
              <Check>上标<Key k="E" /></Check>
              <Check>下标<Key k="B" /></Check>
            </div>
          </div>
          <div className="relative h-[113px] w-[300px] border border-[#dadada] pl-[11px] pt-[19px]">
            <Legend>预览</Legend>
            <div className="relative flex h-[85px] w-[277px] items-center justify-center border border-[#666] pb-[2px]">
              <PreviewGlyphs />
              <span className="absolute bottom-[36px] left-0 h-px w-[24px] bg-black" />
              <span className="absolute bottom-[36px] right-0 h-px w-[25px] bg-black" />
            </div>
          </div>
        </div>

        <div className="mt-[52px] h-[18px] leading-[18px]">这是 TrueType 字体。屏幕和打印机上都将使用该字体。</div>
      </div>
      <div className="ml-[544px] mt-[14px] flex gap-x-[13px]">
        <div className="flex h-[34px] w-[99px] items-center justify-center border-2 border-[#0078d7] bg-[#e1e1e1]">确定</div>
        <div className="flex h-[34px] w-[99px] items-center justify-center border border-[#adadad] bg-[#e1e1e1]">取消</div>
      </div>
    </div>
  );
}

function Watermark() {
  const outline = "[-webkit-text-stroke:1.5px_#d8d8d8] text-white/50 [font-family:'Liberation_Sans',sans-serif] font-bold";
  return (
    <div className="pointer-events-none absolute left-[1470px] top-[822px] h-[170px] w-[350px]">
      <svg width="100" height="112" viewBox="0 0 100 112" className="absolute left-[120px] top-0" fill="rgba(255,255,255,0.5)" stroke="#d8d8d8" strokeWidth="1.500">
        <ellipse cx="12" cy="52" rx="12" ry="17" transform="rotate(-15 12 52)" />
        <ellipse cx="36" cy="25" rx="11" ry="17" />
        <ellipse cx="64" cy="29" rx="12" ry="17" transform="rotate(10 64 29)" />
        <ellipse cx="90" cy="62" rx="10" ry="17" transform="rotate(5 90 62)" />
        <path d="M50 50q12 0 20 16 22 22 14 34-8 10-34 8-30 2-36-8-6-16 14-32 10-18 22-18z" />
      </svg>
      <span className={`absolute left-[3px] top-[31px] text-[72px] leading-[84px] ${outline}`}>Bai</span>
      <span className={`absolute left-[150px] top-[53px] text-[42px] leading-[50px] ${outline}`}>du</span>
      <span className={`absolute left-[224px] top-[44px] whitespace-nowrap text-[58px] leading-[70px] ${outline} [font-family:'Noto_Sans_CJK_SC',sans-serif]`}>经验</span>
      <span className={`absolute left-[2px] top-[116px] whitespace-nowrap text-[47px] font-normal leading-[56px] tracking-[1px] ${outline}`}>jingyan.baidu.com</span>
    </div>
  );
}

export default function App() {
  return (
    <div className="relative h-[1028px] w-[1920px] overflow-hidden bg-white text-[15px] [font-family:'Noto_Sans','Noto_Sans_CJK_SC',sans-serif]">
      <div className="relative h-[81px]" style={{ backgroundColor: GREEN }}>
        <svg width="1920" height="81" viewBox="0 0 1920 81" className="absolute left-0 top-0" fill="#246844">
          <path d="M1322 24q6-18 40-19 36 0 42 22 0 14-22 18-16 3-24 2l-24 2-14-3 8-6q-8-6-6-16z" />
          <path d="M1566 0v33l-36 2-50 6-52 6 3 11 106 2 8-10 21 5 122-5 73-13-6-37z" />
          <path d="M1786 0l4 16 16 4-4-20zM1843 38q14-8 36-4 24 0 41 10v28h-24l-44-4q-14-14-9-30z" />
        </svg>
        <div className="relative">
          <TitleBar />
          <RibbonTabs />
        </div>
      </div>
      <Ribbon />
      <FormulaBar />
      <Sheet />
      <SheetTabs />
      <StatusBar />
      <Watermark />
      <Dialog />
    </div>
  );
}
